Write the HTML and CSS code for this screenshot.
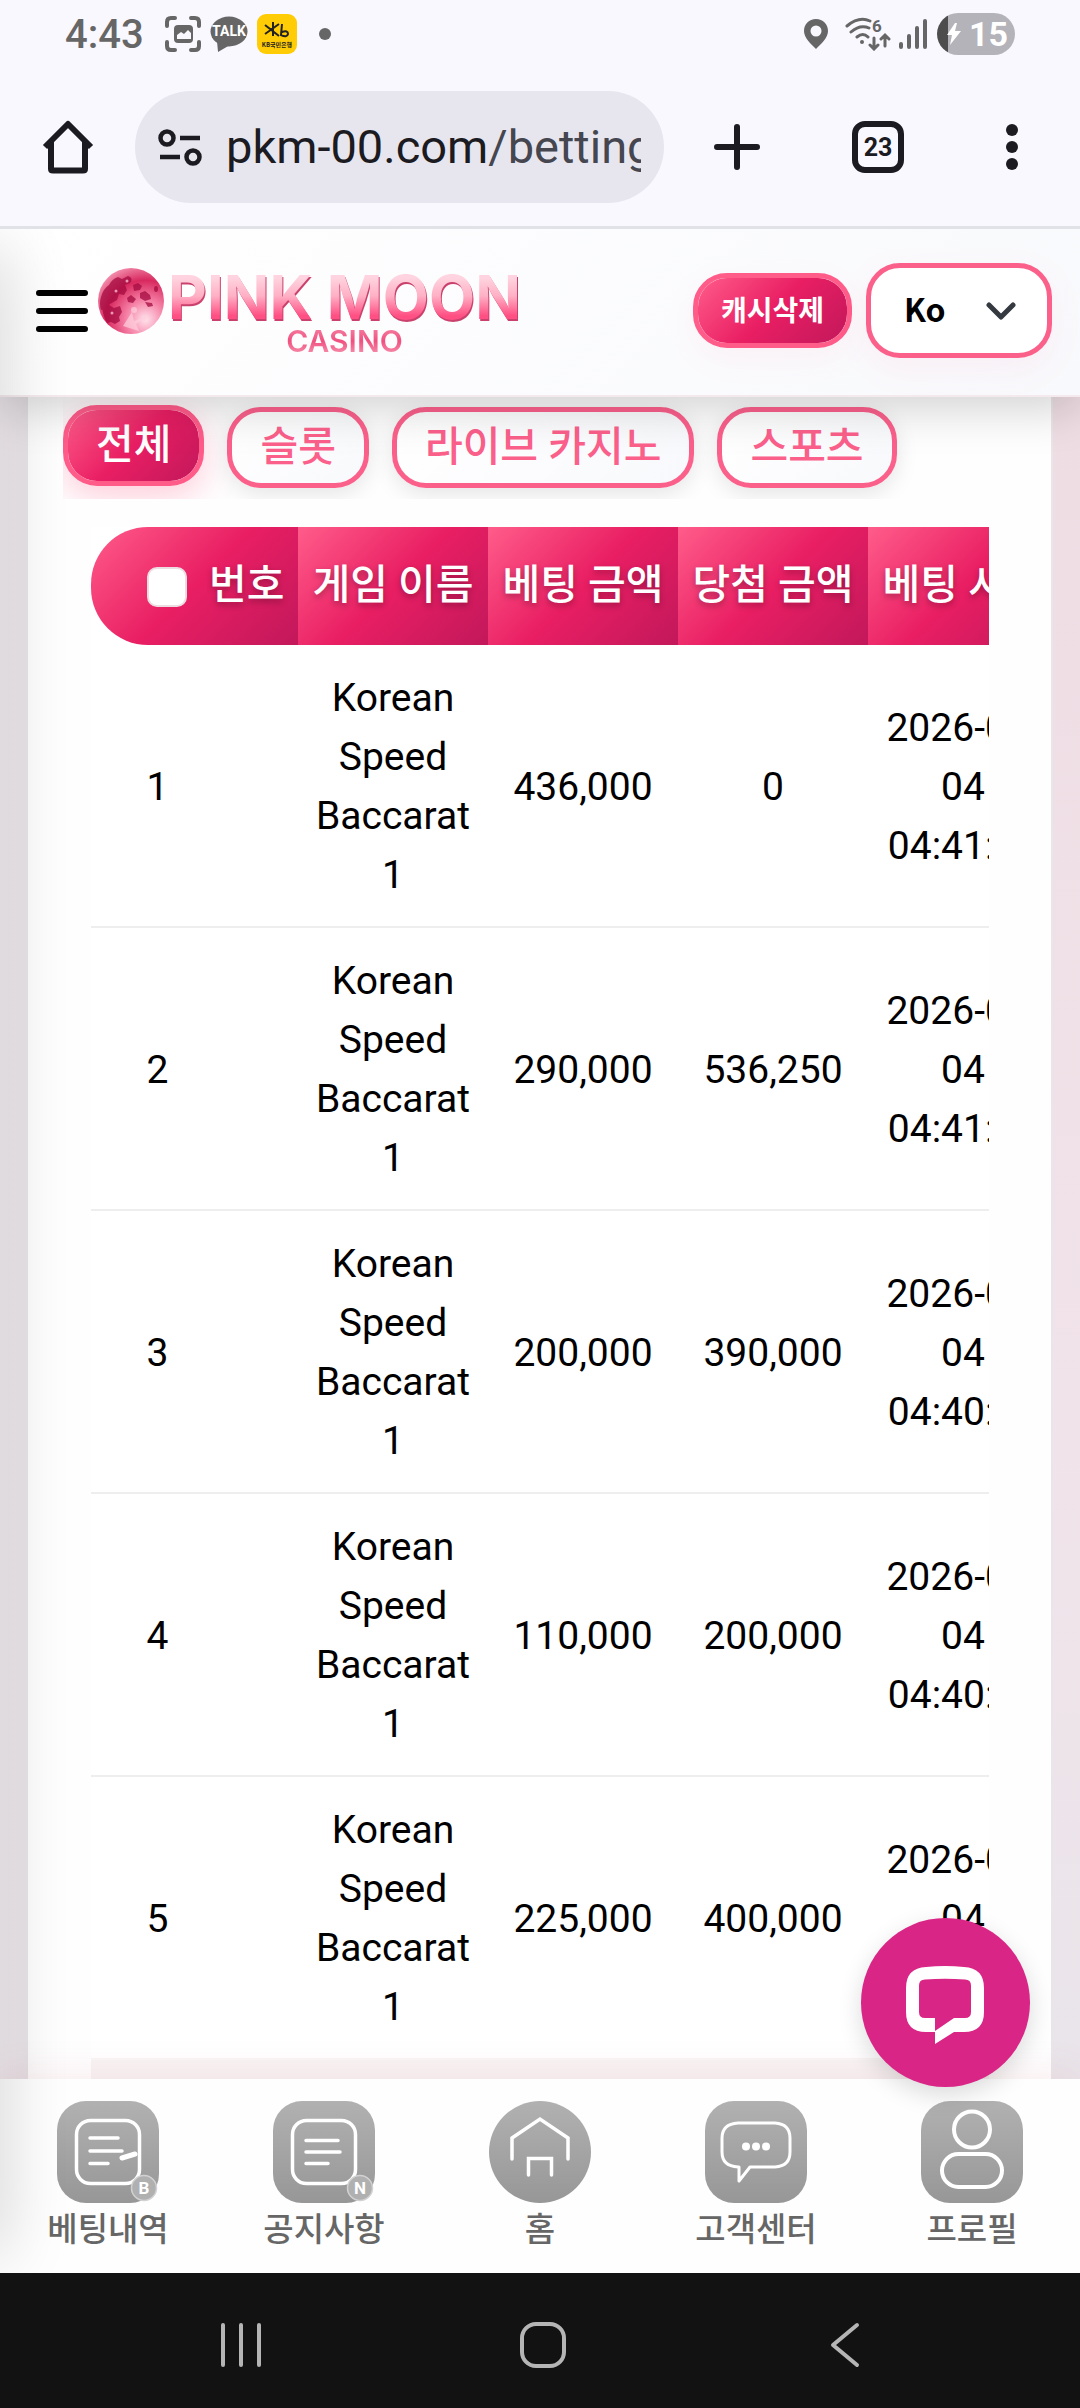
FILE: index.html
```html
<!DOCTYPE html>
<html lang="ko">
<head>
<meta charset="utf-8">
<meta name="viewport" content="width=device-width, initial-scale=1">
<title>Pink Moon Casino</title>
<link rel="stylesheet" href="styles.css">
</head>
<body>
<div class="status">
  <span class="time">4:43</span>
  <svg class="st-shot" width="36" height="36" viewBox="0 0 36 36"><path d="M2 10V6q0-4 4-4h4M26 2h4q4 0 4 4v4M34 26v4q0 4-4 4h-4M10 34H6q-4 0-4-4v-4" fill="none" stroke="#666" stroke-width="4" stroke-linecap="round"/><rect x="9" y="9" width="19" height="18" rx="4" fill="#666"/><path d="M12 23v-4l4-3 3 2 4-4 3 3v6z" fill="#f9f8ff"/></svg>
  <svg class="st-talk" width="38" height="36" viewBox="0 0 38 36"><ellipse cx="19" cy="15.500" rx="18.500" ry="15" fill="#666"/><path d="M7 25l1 11 12-7z" fill="#666"/><text x="19" y="20" text-anchor="middle" class="talk">TALK</text></svg>
  <svg class="st-kb" width="40" height="40" viewBox="0 0 40 40"><rect width="40" height="40" rx="9" fill="#ffcc05"/><path d="M8 11l14 11M8 20l14-10M16 8v14M25 10l-1 11q6 3 7-1 0-4-6-2" fill="none" stroke="#222" stroke-width="2"/><text x="20" y="33" text-anchor="middle" class="kb">KB국민은행</text></svg>
  <span class="dot"></span>
  <svg class="st-pin" width="26" height="32" viewBox="0 0 26 32"><path d="M13 1C6 1 1 6 1 13c0 7 7 13 12 18 5-5 12-11 12-18C25 6 20 1 13 1z" fill="#666"/><circle cx="13" cy="13" r="5.500" fill="#f9f8ff"/></svg>
  <svg class="st-wifi" width="46" height="34" viewBox="0 0 46 34"><g fill="none" stroke="#666" stroke-width="3" stroke-linecap="round"><path d="M2 9q12-10 23-5M6 15q9-8 18-4M12 20q6-5 11 0M29 21v10M25 28l4 4 4-4M40 29V19M36 22l4-4 4 4"/></g><circle cx="17" cy="25" r="2" fill="#666"/><text x="27" y="15" class="wifi6">6</text></svg>
  <svg class="st-signal" width="30" height="32" viewBox="0 0 30 32"><path d="M3 26v3M11 18v11M19 10v19M27 3v26" stroke="#666" stroke-width="4" stroke-linecap="round"/></svg>
  <span class="battery"><svg width="14" height="22" viewBox="0 0 14 22"><path d="M8 0L0 12h5L3 22l11-14H8l2-8z" fill="#fff"/></svg>15</span>
</div>

<div class="toolbar">
  <button class="icon-btn" aria-label="홈페이지"><svg width="52" height="54" viewBox="0 0 52 54"><path d="M3 27L26 4l23 23M9 22v27q0 1.500 2 1.500h30q2 0 2-1.500V22" fill="none" stroke="#1b1b21" stroke-width="6" stroke-linejoin="round"/></svg></button>
  <div class="omnibox">
    <svg width="44" height="38" viewBox="0 0 44 38"><g fill="none" stroke="#1b1b21" stroke-width="4.500"><circle cx="9" cy="10" r="6.500"/><circle cx="35" cy="29" r="6.500"/><path d="M22 10h20M2 29h20"/></g></svg>
    <a class="url" href="#">pkm-00.com<span>/betting</span></a>
  </div>
  <button class="icon-btn plus" aria-label="새 탭"><svg width="46" height="46" viewBox="0 0 46 46"><path d="M23 3v40M3 23h40" stroke="#1b1b21" stroke-width="6" stroke-linecap="round"/></svg></button>
  <button class="tabs-count">23</button>
  <button class="icon-btn more" aria-label="더보기"><svg width="12" height="48" viewBox="0 0 12 48"><g fill="#1b1b21"><circle cx="6" cy="7" r="6"/><circle cx="6" cy="24" r="6"/><circle cx="6" cy="41" r="6"/></g></svg></button>
</div>

<div class="site">
  <header class="site-header">
    <button class="icon-btn" aria-label="메뉴"><svg width="52" height="44" viewBox="0 0 52 44"><path d="M3 4h46M3 22h46M3 40h46" stroke="#000" stroke-width="6" stroke-linecap="round"/></svg></button>
    <a class="logo" href="#">
      <svg width="66" height="66" viewBox="0 0 66 66"><defs><radialGradient id="moon" cx=".72" cy=".78" r=".85"><stop offset="0" stop-color="#ffe3ec"/><stop offset=".35" stop-color="#f57fa5"/><stop offset=".7" stop-color="#d8295f"/><stop offset="1" stop-color="#f28bab"/></radialGradient></defs><circle cx="33" cy="33" r="33" fill="url(#moon)"/><g fill="#a50a40" opacity=".75"><path d="M11 17q3-6 9-8l4 2 6-3q6 2 2 7l-5 2 2 5-3 5-5-1-2 6-7 4-4 5-5 1q-2-7 0-13 2-8 8-12z"/><path d="M4 39l7-2 5 3 6-2 2 6-3 5 1 4-5 3-4-2-4 1q-4-7-5-16z"/><path d="M35 17l5-2 4 3-2 4-6 1z"/><path d="M42 25l5-2 5 4 1 4-6 2-5-3z"/><ellipse cx="58" cy="21" rx="2" ry="3"/><path d="M47 34l7 1 1 3-5 1z"/><path d="M29 30l4-3 5 4-3 4-5-1z"/></g><g fill="#ffd0de" opacity=".7"><circle cx="18" cy="23" r="1.500"/><circle cx="29" cy="13" r="1.500"/><circle cx="14" cy="45" r="1.500"/><circle cx="36" cy="42" r="3"/><circle cx="46" cy="50" r="3"/><path d="M25 58l9-14 2 9 13-5-11 8 3 7z"/></g></svg>
      <span class="logo-text"><span class="logo-name">PINK MOON</span><span class="logo-sub">CASINO</span></span>
    </a>
    <button class="cache-btn">캐시삭제</button>
    <div class="lang">
      <select aria-label="언어"><option>Ko</option><option>En</option></select>
      <svg width="30" height="18" viewBox="0 0 30 18"><path d="M3 3l12 12L27 3" fill="none" stroke="#343a40" stroke-width="5" stroke-linecap="round" stroke-linejoin="round"/></svg>
    </div>
  </header>

  <main class="main">
    <section class="panel">
      <div class="tabs">
        <button class="tab active">전체</button>
        <button class="tab">슬롯</button>
        <button class="tab">라이브 카지노</button>
        <button class="tab">스포츠</button>
      </div>
      <div class="table-wrap">
        <table>
          <thead><tr><th><label class="check"><input type="checkbox"><span>번호</span></label></th><th>게임 이름</th><th>베팅 금액</th><th>당첨 금액</th><th>베팅 시간</th></tr></thead>
          <tbody>
            <tr><td>1</td><td>Korean Speed Baccarat 1</td><td>436,000</td><td>0</td><td>2026-01-<br>04<br>04:41:50</td></tr>
            <tr><td>2</td><td>Korean Speed Baccarat 1</td><td>290,000</td><td>536,250</td><td>2026-01-<br>04<br>04:41:20</td></tr>
            <tr><td>3</td><td>Korean Speed Baccarat 1</td><td>200,000</td><td>390,000</td><td>2026-01-<br>04<br>04:40:50</td></tr>
            <tr><td>4</td><td>Korean Speed Baccarat 1</td><td>110,000</td><td>200,000</td><td>2026-01-<br>04<br>04:40:20</td></tr>
            <tr><td>5</td><td>Korean Speed Baccarat 1</td><td>225,000</td><td>400,000</td><td>2026-01-<br>04<br>04:39:50</td></tr>
          </tbody>
        </table>
        <div class="table-end"></div>
      </div>
    </section>
  </main>

  <nav class="bottom-nav">
    <a href="#"><svg width="102" height="102" viewBox="0 0 102 102"><defs><linearGradient id="grey" x1="0" y1="0" x2="0" y2="1"><stop offset="0" stop-color="#b1b1b1"/><stop offset="1" stop-color="#979797"/></linearGradient></defs><rect width="102" height="102" rx="29" fill="url(#grey)"/><g fill="none" stroke="#fff" stroke-width="3.500" stroke-linecap="round"><rect x="19.500" y="19.500" width="63" height="63" rx="14"/><path d="M33 37h28M33 50h32M33 62.500h18"/><path d="M65 57l13-4" stroke-width="5"/></g><circle cx="87" cy="87" r="12.500" fill="#b0b0b0" stroke="#d2d2d2" stroke-width="1.500"/><text x="87" y="93" text-anchor="middle" class="badge">B</text></svg>베팅내역</a>
    <a href="#"><svg width="102" height="102" viewBox="0 0 102 102"><rect width="102" height="102" rx="29" fill="url(#grey)"/><g fill="none" stroke="#fff" stroke-width="3.500" stroke-linecap="round"><rect x="19.500" y="19.500" width="63" height="63" rx="14"/><path d="M33 39.500h32M33 51h34M33 62.500h22"/></g><circle cx="87" cy="87" r="12.500" fill="#b0b0b0" stroke="#d2d2d2" stroke-width="1.500"/><text x="87" y="93" text-anchor="middle" class="badge">N</text></svg>공지사항</a>
    <a href="#"><svg width="102" height="102" viewBox="0 0 102 102"><circle cx="51" cy="51" r="51" fill="url(#grey)"/><path d="M23 58V37L51 18l28 19v21M39.500 74V57.500h23V74" fill="none" stroke="#fff" stroke-width="3.500" stroke-linecap="round"/></svg>홈</a>
    <a href="#"><svg width="102" height="102" viewBox="0 0 102 102"><rect width="102" height="102" rx="29" fill="url(#grey)"/><path d="M33 66q-16-1-16-15V37q0-14 16-15h37q15 1 15 15v14q0 14-15 15H45L34 80V66z" fill="none" stroke="#fff" stroke-width="3" stroke-linejoin="round"/><g fill="#fff"><circle cx="41" cy="45.500" r="4"/><circle cx="51" cy="45.500" r="4"/><circle cx="61" cy="45.500" r="4"/></g></svg>고객센터</a>
    <a href="#"><svg width="102" height="102" viewBox="0 0 102 102"><rect width="102" height="102" rx="29" fill="url(#grey)"/><g fill="none" stroke="#fff" stroke-width="4"><circle cx="51" cy="28.500" r="18"/><rect x="21" y="53" width="60" height="33" rx="16.500"/></g></svg>프로필</a>
  </nav>
  <div class="edge-shadow"></div>
  <button class="chat" aria-label="채팅"><svg width="169" height="169" viewBox="0 0 169 169"><path fill="#fff" fill-rule="evenodd" d="M65 49q19-2 38 0 20 1 20 21v24q0 20-20 20H93L74 126v-12h-9q-20 0-20-20V70q0-20 20-21zM64 61.500q-6 0-6 6V94q0 6 6 6h10v13l19-13h11q6 0 6-6V67.500q0-6-6-6-20-1.500-40 0z"/></svg></button>
</div>

<div class="sysnav">
  <button aria-label="최근 앱"><svg width="48" height="48" viewBox="0 0 48 48"><path d="M6 4v40M24 4v40M42 4v40" stroke="#b5b5b5" stroke-width="4" stroke-linecap="round"/></svg></button>
  <button aria-label="홈"><svg width="48" height="48" viewBox="0 0 48 48"><rect x="3" y="3" width="42" height="42" rx="14" fill="none" stroke="#b5b5b5" stroke-width="4"/></svg></button>
  <button aria-label="뒤로"><svg width="48" height="48" viewBox="0 0 48 48"><path d="M36 4L12 24l24 20" fill="none" stroke="#b5b5b5" stroke-width="4" stroke-linecap="round" stroke-linejoin="round"/></svg></button>
</div>
</body>
</html>
```

FILE: styles.css
```css
* { box-sizing: border-box; }
body {
  margin: 0;
  min-height: 100vh;
  display: flex;
  flex-direction: column;
  background: #f9f8ff;
  font-family: Roboto, "Noto Sans CJK KR", sans-serif;
  color: #000;
}
button { font-family: inherit; border: 0; padding: 0; background: none; }
a { color: inherit; text-decoration: none; }
svg { display: block; flex: none; }

/* device status bar */
.status {
  display: flex;
  align-items: center;
  height: 68px;
  padding: 0 65px;
}
.time { font-size: 40px; font-weight: 500; color: #666; width: 100px; }
.talk { font: 700 14px Roboto, sans-serif; fill: #fff; }
.kb { font: 700 6px "Noto Sans CJK KR", sans-serif; fill: #222; }
.wifi6 { font: 700 17px Roboto, sans-serif; fill: #666; }
.st-talk { margin-left: 9px; }
.st-kb { margin-left: 9px; }
.dot { width: 12px; height: 12px; border-radius: 50%; background: #666; margin-left: 22px; }
.st-pin { margin-left: auto; }
.st-wifi { margin-left: 16px; }
.st-signal { margin-left: 7px; }
.battery {
  display: flex;
  align-items: center;
  gap: 8px;
  width: 78px;
  height: 42px;
  margin-left: 9px;
  padding-left: 10px;
  border-radius: 21px;
  background: linear-gradient(90deg, #4d4d4d 11px, #b4b3b9 11px);
  color: #fff;
  font-size: 34px;
  line-height: 42px;
  font-weight: 700;
}

/* browser toolbar */
.toolbar {
  display: flex;
  align-items: center;
  height: 161px;
  padding: 0 62px 0 42px;
  border-bottom: 3px solid #e0e2e8;
}
.omnibox {
  flex: 1;
  min-width: 0;
  display: flex;
  align-items: center;
  gap: 24px;
  height: 112px;
  margin-left: 41px;
  padding: 0 23px;
  border-radius: 56px;
  background: #e7e6ef;
}
.url {
  flex: 1;
  overflow: hidden;
  white-space: nowrap;
  font-size: 47px;
  line-height: 64px;
  color: #1b1b21;
}
.url span { color: #45464f; }
.plus { margin-left: 50px; }
.tabs-count {
  width: 52px;
  height: 52px;
  margin-left: 92px;
  border: 6px solid #1b1b21;
  border-radius: 13px;
  font-size: 25px;
  font-weight: 700;
  color: #1b1b21;
}
.more { margin-left: 102px; }

/* casino site */
.site {
  position: relative;
  flex: 1;
  display: flex;
  flex-direction: column;
  overflow: hidden;
}
.site-header {
  position: relative;
  z-index: 2;
  display: flex;
  align-items: center;
  padding: 34px 28px 37px 36px;
  background: linear-gradient(135deg, #fff, #f8f9fc);
  border-bottom: 2px solid #f4eaed;
  box-shadow: 0 11px 44px rgba(0, 0, 0, .18);
}
.logo { display: flex; align-items: center; gap: 4px; margin-left: 10px; }
.logo > svg { margin-bottom: 20px; }
.logo-text { display: flex; flex-direction: column; align-items: center; padding-top: 7px; }
.logo-name, .logo-sub {
  font-family: Inter, sans-serif;
  -webkit-background-clip: text;
  background-clip: text;
  color: transparent;
}
.logo-name {
  font-size: 60px;
  line-height: 54px;
  font-weight: 700;
  background-image: linear-gradient(#ffd3df 15%, #ffb0c5 48%, #ff4f83 85%);
  filter: drop-shadow(1px 2px 0 #c9416c);
}
.logo-sub {
  font-size: 30px;
  line-height: 34px;
  font-weight: 600;
  background-image: linear-gradient(#f58bab, #f0517f 50%, #f9a0ba);
}
.cache-btn {
  width: 159px;
  height: 75px;
  margin-left: auto;
  border: 5px solid #ff5c8a;
  border-radius: 34px;
  background: linear-gradient(135deg, #ff5c8a, #e91e63 50%, #c2185b) padding-box;
  color: #fff;
  font-size: 28px;
  font-weight: 700;
  padding-bottom: 4px;
  box-shadow: 0 11px 34px rgba(255, 92, 138, .06);
}
.lang {
  display: flex;
  align-items: center;
  width: 186px;
  height: 95px;
  margin-left: 14px;
  padding-right: 31px;
  border: 5px solid #fb608b;
  border-radius: 34px;
  background: #fff;
  box-shadow: 0 11px 34px rgba(255, 92, 138, .07);
}
.lang select {
  appearance: none;
  flex: 1;
  min-width: 0;
  height: 60px;
  border: 0;
  padding: 0 0 6px 33px;
  background: none;
  font: 700 32px "Noto Sans CJK KR", sans-serif;
  color: #000;
}
.main {
  flex: 1;
  display: flex;
  padding: 0 27px 0 28px;
  background:
    linear-gradient(90deg, #f6f0f4, #e9e4e8) left / 28px 100% no-repeat,
    linear-gradient(#eedde3, #f1e3ea 60%, #e9e5ea);
}
.panel {
  flex: 1;
  min-width: 0;
  padding: 0 62px 0 35px;
  border-right: 2px solid #e9e6ea;
  background: #fefefe;
}
.tabs {
  display: flex;
  gap: 23px;
  padding: 10px 0 11px;
  overflow: hidden;
}
.tab {
  height: 81px;
  padding: 0 28px 2px;
  border: 5px solid #fb608b;
  border-radius: 34px;
  background: linear-gradient(135deg, #fff, #f8f9fc);
  color: #fb608b;
  font-size: 41px;
  line-height: 60px;
  font-weight: 500;
  white-space: nowrap;
  box-shadow: 0 6px 22px rgba(0, 0, 0, .1);
}
.tab.active {
  margin: -2px 0 2px;
  border-color: #ff5c8a;
  background: linear-gradient(135deg, #ff5c8a, #e91e63 50%, #c2185b) padding-box;
  color: #fff;
  box-shadow: 0 11px 34px rgba(255, 92, 138, .3);
}
.table-wrap { margin: 28px 0 0 28px; overflow: hidden; background: #fff; }
table { width: 967px; table-layout: fixed; border-collapse: separate; border-spacing: 0; }
th {
  width: 190px;
  height: 118px;
  padding: 0 0 3px;
  background: linear-gradient(135deg, #ff5c8a, #e91e63 50%, #c2185b);
  color: #fff;
  font-size: 41px;
  line-height: 60px;
  font-weight: 500;
  white-space: nowrap;
  text-shadow: 0 3px 6px rgba(0, 0, 0, .3);
}
th:first-child { width: 207px; border-radius: 57px 0 0 57px; }
.check { display: flex; align-items: center; gap: 22px; padding-left: 56px; }
.check input {
  appearance: none;
  flex: none;
  width: 40px;
  height: 40px;
  margin: 4px 0 0;
  border: 2px solid #ecdde3;
  border-radius: 10px;
  background: #fff;
}
td {
  padding: 24px 0 21px;
  border-bottom: 2px solid #eee;
  text-align: center;
  font-size: 39px;
  line-height: 59px;
}
td:first-child { padding-right: 74px; }
td:nth-child(2) { padding-left: 10px; padding-right: 10px; }
tr:last-child td { border-bottom-color: #faf6f6; }
.table-end { height: 19px; background: #f8f4f4; }

.bottom-nav {
  position: relative;
  display: grid;
  grid-template-columns: repeat(5, 1fr);
  padding: 22px 0 19px;
  background: #fefefe;
  box-shadow: 0 -6px 34px rgba(200, 90, 110, .1);
}
.bottom-nav a {
  display: flex;
  flex-direction: column;
  align-items: center;
  gap: 3px;
  color: #666;
  font-size: 33px;
  line-height: 48px;
  font-weight: 500;
}
.badge { font: 700 17px Roboto, sans-serif; fill: #fff; }
.edge-shadow {
  position: absolute;
  z-index: 3;
  top: 20px;
  bottom: 20px;
  left: -40px;
  width: 40px;
  box-shadow: 0 0 66px rgba(0, 0, 0, .22);
  pointer-events: none;
}
.chat {
  position: absolute;
  z-index: 4;
  right: 50px;
  bottom: 186px;
  border-radius: 50%;
  background: #d92586;
  box-shadow: 0 8px 24px rgba(0, 0, 0, .14);
}

.sysnav {
  display: flex;
  justify-content: space-between;
  align-items: center;
  height: 135px;
  padding: 8px 211px 0 217px;
  background: #121212;
}
```
